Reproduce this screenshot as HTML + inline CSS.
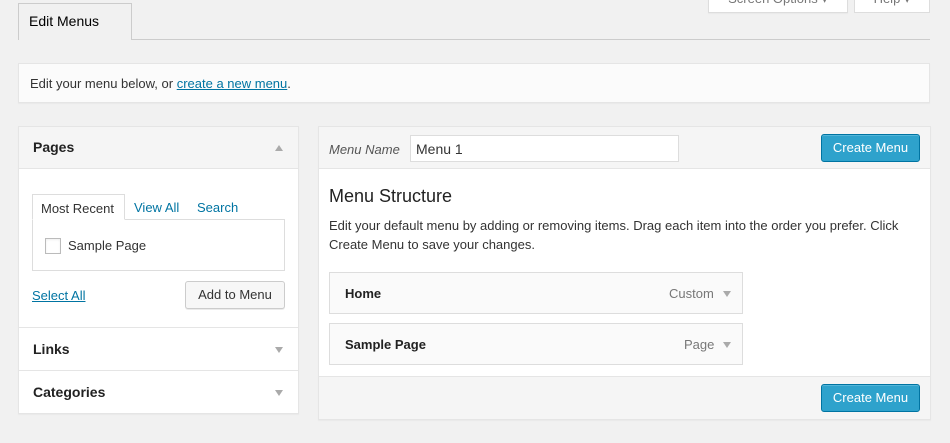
<!DOCTYPE html><html><head><style>
*{box-sizing:border-box;margin:0;padding:0}
body{width:950px;height:443px;background:#f1f1f1;font-family:"Liberation Sans",sans-serif;font-size:13px;color:#444;position:relative;overflow:hidden}
.a{position:absolute}
.box{background:#fff;border:1px solid #e5e5e5;box-shadow:0 1px 1px rgba(0,0,0,.04)}
.btnp{background:#2ea2cc;border:1px solid #0074a2;border-radius:3px;color:#fff;font-size:13px;text-align:center;line-height:25px;box-shadow:inset 0 1px 0 rgba(120,200,230,.5)}
.btn{background:#f7f7f7;border:1px solid #ccc;border-radius:3px;color:#555;text-align:center;line-height:25px;box-shadow:0 1px 0 rgba(0,0,0,.08)}
.tri{width:0;height:0;border-left:4px solid transparent;border-right:4px solid transparent;border-top:6px solid #aaa}
.triu{width:0;height:0;border-left:4px solid transparent;border-right:4px solid transparent;border-bottom:6px solid #aaa}
a{color:#0074a2}
b{color:#222}
</style></head><body>
<div class="a" style="left:18px;top:39px;width:912px;height:1px;background:#ccc"></div>
<div class="a" style="left:18px;top:3px;width:114px;height:37px;border:1px solid #ccc;border-bottom:none;background:#f1f1f1;font-size:14px;color:#000;padding:9px 0 0 10px">Edit Menus</div>
<div class="a" style="left:708px;top:-14px;width:140px;height:27px;background:#fff;border:1px solid #ddd;box-shadow:0 1px 1px rgba(0,0,0,.04);color:#777;text-align:center;line-height:24px">Screen Options ▾</div>
<div class="a" style="left:854px;top:-14px;width:76px;height:27px;background:#fff;border:1px solid #ddd;color:#777;text-align:center;line-height:24px">Help ▾</div>
<div class="a box" style="left:18px;top:63px;width:912px;height:40px;background:#fbfbfb;padding:12px 0 0 11px;color:#333">Edit your menu below, or <a href="#">create a new menu</a>.</div>
<div class="a box" style="left:18px;top:126px;width:281px;height:288px"></div>
<div class="a" style="left:19px;top:127px;width:279px;height:42px;background:#f5f5f5;border-bottom:1px solid #e5e5e5"></div>
<div class="a" style="left:33px;top:139px;font-size:14px;font-weight:bold;color:#222">Pages</div>
<div class="a triu" style="left:275px;top:145px"></div>
<div class="a" style="left:32px;top:219px;width:253px;height:52px;border:1px solid #ddd"></div>
<div class="a" style="left:32px;top:194px;width:93px;height:26px;border:1px solid #ddd;border-bottom:1px solid #fff;background:#fff;padding:6px 0 0 8px;color:#333">Most Recent</div>
<div class="a" style="left:134px;top:200px;color:#0074a2">View All</div>
<div class="a" style="left:197px;top:200px;color:#0074a2">Search</div>
<div class="a" style="left:45px;top:238px;width:16px;height:16px;border:1px solid #bbb;box-shadow:inset 0 1px 2px rgba(0,0,0,.07)"></div>
<div class="a" style="left:68px;top:238px;color:#333">Sample Page</div>
<div class="a" style="left:32px;top:288px"><a href="#">Select All</a></div>
<div class="a btn" style="left:185px;top:281px;width:100px;height:28px;color:#333">Add to Menu</div>
<div class="a" style="left:19px;top:327px;width:279px;height:1px;background:#e5e5e5"></div>
<div class="a" style="left:33px;top:341px;font-size:14px;font-weight:bold;color:#222">Links</div>
<div class="a tri" style="left:275px;top:347px"></div>
<div class="a" style="left:19px;top:370px;width:279px;height:1px;background:#e5e5e5"></div>
<div class="a" style="left:33px;top:384px;font-size:14px;font-weight:bold;color:#222">Categories</div>
<div class="a tri" style="left:275px;top:390px"></div>
<div class="a box" style="left:318px;top:126px;width:613px;height:294px"></div>
<div class="a" style="left:319px;top:127px;width:611px;height:42px;background:#f5f5f5;border-bottom:1px solid #e5e5e5"></div>
<div class="a" style="left:329px;top:142px;font-style:italic;color:#555">Menu Name</div>
<div class="a" style="left:410px;top:135px;width:269px;height:27px;border:1px solid #ddd;background:#fff;font-size:14px;color:#333;padding:5px 0 0 5px">Menu 1</div>
<div class="a btnp" style="left:821px;top:134px;width:99px;height:28px">Create Menu</div>
<div class="a" style="left:329px;top:186px;font-size:18px;color:#222">Menu Structure</div>
<div class="a" style="left:329px;top:216px;width:595px;line-height:19px;color:#333">Edit your default menu by adding or removing items. Drag each item into the order you prefer. Click Create Menu to save your changes.</div>
<div class="a" style="left:329px;top:272px;width:414px;height:42px;background:#fafafa;border:1px solid #ddd"></div>
<div class="a" style="left:345px;top:286px;font-weight:bold;color:#222">Home</div>
<div class="a" style="left:669px;top:286px;color:#777">Custom</div>
<div class="a tri" style="left:723px;top:291px"></div>
<div class="a" style="left:329px;top:323px;width:414px;height:42px;background:#fafafa;border:1px solid #ddd"></div>
<div class="a" style="left:345px;top:337px;font-weight:bold;color:#222">Sample Page</div>
<div class="a" style="left:684px;top:337px;color:#777">Page</div>
<div class="a tri" style="left:723px;top:342px"></div>
<div class="a" style="left:319px;top:376px;width:611px;height:43px;background:#f5f5f5;border-top:1px solid #e5e5e5"></div>
<div class="a btnp" style="left:821px;top:384px;width:99px;height:28px">Create Menu</div>
</body></html>
